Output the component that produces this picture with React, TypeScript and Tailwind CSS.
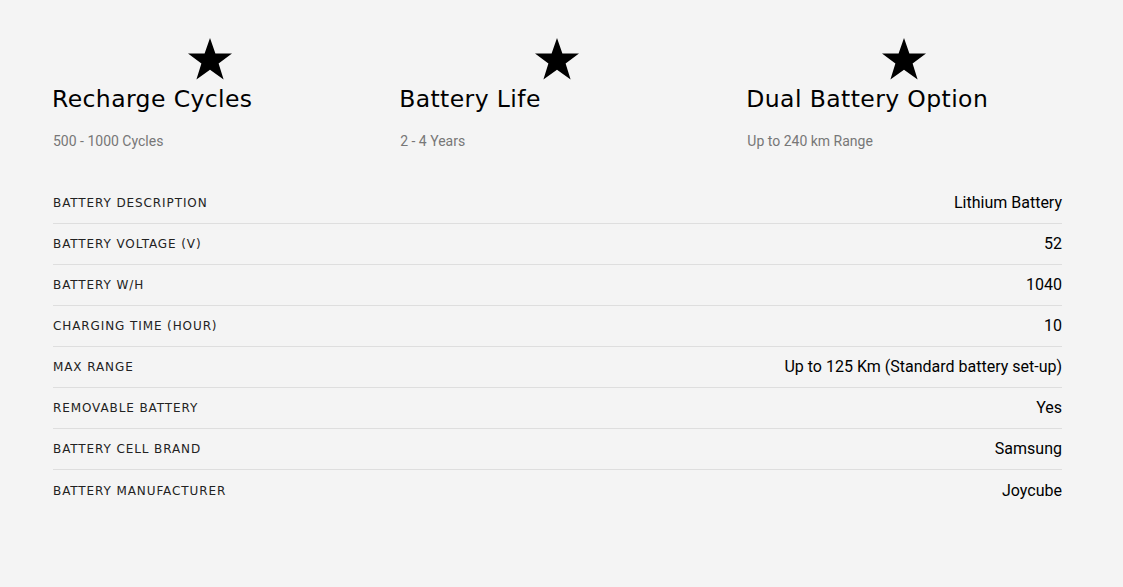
import React from 'react';

const features = [
    { title: 'Recharge Cycles', sub: '500 - 1000 Cycles' },
    { title: 'Battery Life', sub: '2 - 4 Years' },
    { title: 'Dual Battery Option', sub: 'Up to 240 km Range' },
];

const specs = [
    ['Battery Description', 'Lithium Battery'],
    ['Battery Voltage (V)', '52'],
    ['Battery W/H', '1040'],
    ['Charging Time (Hour)', '10'],
    ['Max Range', 'Up to 125 Km (Standard battery set-up)'],
    ['Removable Battery', 'Yes'],
    ['Battery Cell Brand', 'Samsung'],
    ['Battery Manufacturer', 'Joycube'],
];

function Star() {
    return (
        <svg viewBox="0 0 24 24" className="h-[48px] w-[48px]">
            <polygon
                points="12,1 14.7,8.8 23,8.8 16.3,13.7 18.8,21.8 12,16.9 5.2,21.8 7.7,13.7 1,8.8 9.3,8.8"
                fill="#000"
            />
        </svg>
    );
}

export default function App() {
    return (
        <div className="min-h-[587px] w-full bg-[#f4f4f4] font-['Roboto',sans-serif]">
            <div className="ml-[53px] w-[1009px] pt-[36px]">
                <div className="grid grid-cols-3 gap-x-[32.5px]">
                    {features.map((f) => (
                        <div key={f.title} className="flex flex-col">
                            <div className="flex w-[314px] justify-center">
                                <Star />
                            </div>
                            <h3 className="-ml-[1px] font-['DejaVu_Sans',sans-serif] text-[23.5px] leading-[30px] font-normal text-black tracking-[0.4px]">
                                {f.title}
                            </h3>
                            <p className="mt-[17px] text-[14px] leading-[20px] text-[#777]">{f.sub}</p>
                        </div>
                    ))}
                </div>

                <div className="mt-[32px]">
                    {specs.map(([label, value], i) => (
                        <div
                            key={label}
                            className={`flex h-[41px] items-center justify-between ${i < specs.length - 1 ? 'border-b border-[#dedede]' : ''}`}
                        >
                            <span className="font-['DejaVu_Sans',sans-serif] text-[12px] uppercase tracking-[0.9px] text-[#222]">
                                {label}
                            </span>
                            <span className="text-[16px] text-black">{value}</span>
                        </div>
                    ))}
                </div>
            </div>
        </div>
    );
}
